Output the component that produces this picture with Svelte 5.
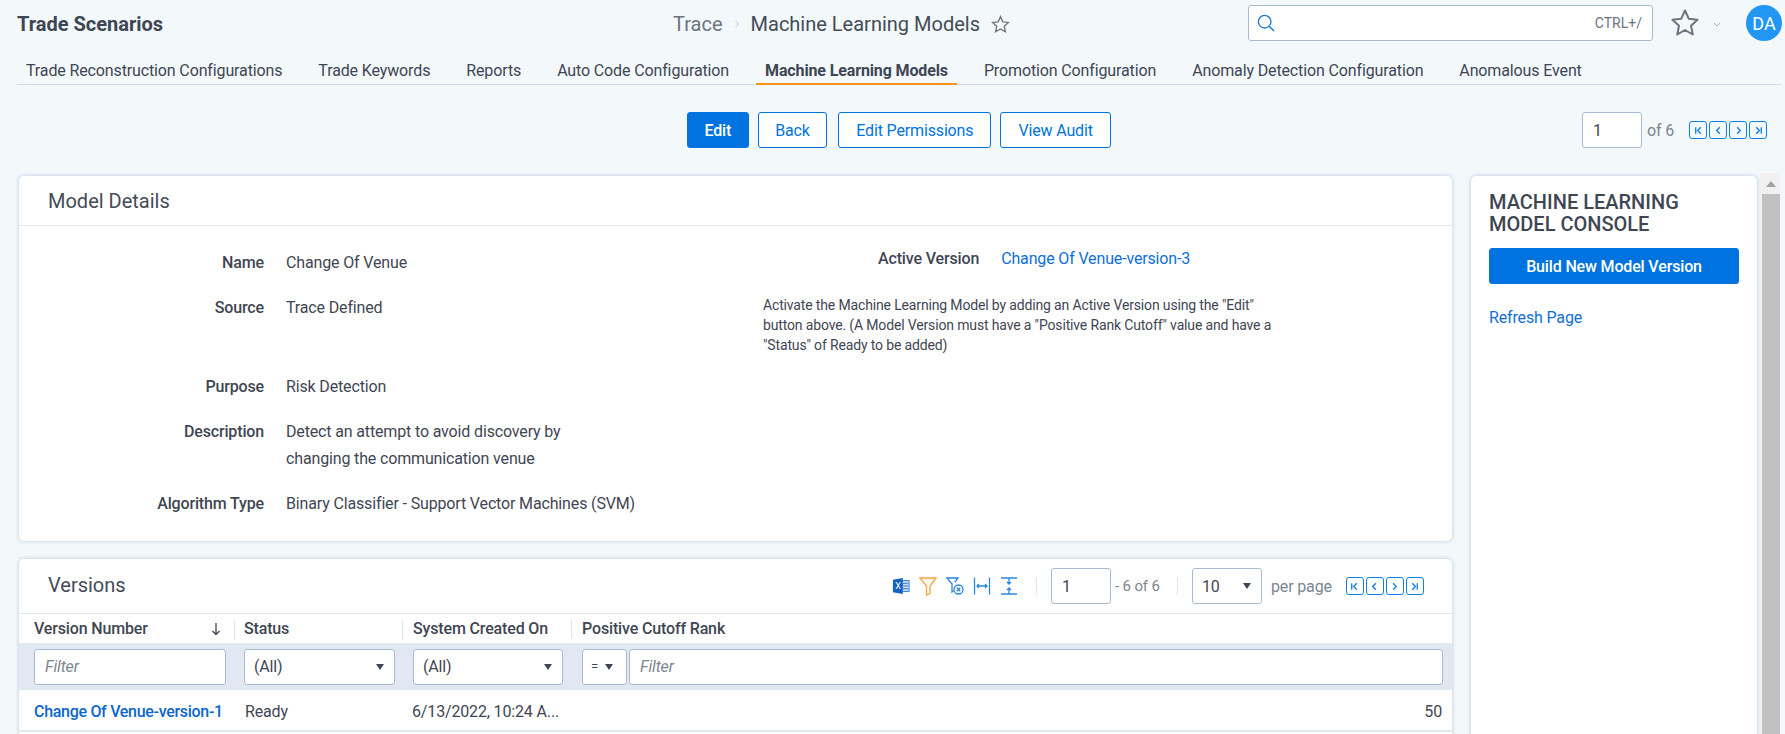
<script>
  const tabs = [
    'Trade Reconstruction Configurations',
    'Trade Keywords',
    'Reports',
    'Auto Code Configuration',
    'Machine Learning Models',
    'Promotion Configuration',
    'Anomaly Detection Configuration',
    'Anomalous Event'
  ];
  const activeTab = 'Machine Learning Models';
  const pagers = [
    'M4 3.5v7M9.5 3.5 6 7l3.5 3.5',
    'M8.5 3.5 5 7l3.5 3.5',
    'M5.5 3.5 9 7l-3.5 3.5',
    'M10 3.5v7M4.5 3.5 8 7l-3.5 3.5'
  ];
</script>

{#snippet pager()}
  <div class="pager">
    {#each pagers as d}
      <button class="page-btn" aria-label="page">
        <svg width="14" height="14" viewBox="0 0 14 14"><path {d} /></svg>
      </button>
    {/each}
  </div>
{/snippet}

<div class="page">
  <header class="topbar">
    <div class="app-name">Trade Scenarios</div>
    <div class="crumbs">
      <span class="crumb">Trace</span>
      <svg class="crumb-sep" width="8" height="10" viewBox="0 0 8 10"><path d="M2.5 2 5.5 5l-3 3" /></svg>
      <span class="crumb-now">Machine Learning Models</span>
      <svg class="crumb-star" width="21" height="21" viewBox="0 0 24 24"><path d="m12 3 2.7 5.9 6.3.7-4.7 4.3 1.3 6.4L12 17.100l-5.600 3.200 1.300-6.400L3 9.600l6.300-.7z" /></svg>
    </div>
    <div class="search">
      <svg width="18" height="18" viewBox="0 0 20 20"><circle cx="8.500" cy="8.500" r="7" /><path d="m13.500 13.500 5.500 5.500" /></svg>
      <span>CTRL+/</span>
    </div>
    <svg class="fav" width="30" height="30" viewBox="0 0 30 30"><path d="m15 2.500 3.700 8.200 8.800 1-6.500 6 1.800 8.800-7.800-4.500-7.800 4.500 1.800-8.800-6.500-6 8.800-1z" /></svg>
    <svg class="caret" width="10" height="6" viewBox="0 0 10 6"><path d="m2 1 3 3 3-3" /></svg>
    <div class="avatar">DA</div>
  </header>

  <nav class="tabs">
    {#each tabs as t}
      <span class="tab" class:active={t === activeTab}>{t}</span>
    {/each}
  </nav>

  <div class="actions">
    <div class="action-btns">
      <button class="btn primary">Edit</button>
      <button class="btn">Back</button>
      <button class="btn perms">Edit Permissions</button>
      <button class="btn audit">View Audit</button>
    </div>
    <div class="record-nav">
      <div class="num-box">1</div>
      <span class="muted">of 6</span>
      {@render pager()}
    </div>
  </div>

  <div class="content">
    <main class="main">
      <section class="card details">
        <h2 class="card-title">Model Details</h2>
        <div class="fields">
          <div class="label">Name</div>
          <div class="value">Change Of Venue</div>
          <div class="active-row">
            <span class="label">Active Version</span>
            <a class="link" href="#v3">Change Of Venue-version-3</a>
          </div>

          <div class="label">Source</div>
          <div class="value">Trace Defined</div>
          <p class="note">Activate the Machine Learning Model by adding an Active Version using the "Edit" button above. (A Model Version must have a "Positive Rank Cutoff" value and have a "Status" of Ready to be added)</p>

          <div class="label">Purpose</div>
          <div class="value wide">Risk Detection</div>

          <div class="label">Description</div>
          <div class="value wide">Detect an attempt to avoid discovery by<br />changing the communication venue</div>

          <div class="label">Algorithm Type</div>
          <div class="value wide">Binary Classifier - Support Vector Machines (SVM)</div>
        </div>
      </section>

      <section class="card versions">
        <div class="versions-head">
          <h2 class="card-title plain">Versions</h2>
          <div class="tools">
            <svg class="tool" width="18" height="18" viewBox="0 0 20 20">
              <rect x="8" y="4" width="11" height="12" fill="#cfe0f5" stroke="#2a75cf" stroke-width="1" />
              <path d="M12 7h6M12 10h6M12 13h6" stroke="#2a75cf" stroke-width="1.200" />
              <path d="M1 3 12 1v18L1 17z" fill="#1565c0" />
              <text x="3.500" y="13.500" class="xl">X</text>
            </svg>
            <svg class="tool ln orange" width="18" height="20" viewBox="0 0 18 20"><path d="M1 2h16l-6 8v7.500L7.500 19v-9z" /></svg>
            <svg class="tool ln" width="18" height="20" viewBox="0 0 18 20"><path d="M9 6l3-4H1l5 6v8l1.500-1" /><circle cx="12.500" cy="13.500" r="4.500" /><path d="m10.800 11.800 3.400 3.400M14.200 11.800l-3.400 3.400" /></svg>
            <svg class="tool ln" width="18" height="20" viewBox="0 0 18 20"><path d="M1.500 1.500v17M16.500 1.500v17M4 10h10M6 8l-2 2 2 2M12 8l2 2-2 2" /></svg>
            <svg class="tool ln" width="18" height="20" viewBox="0 0 18 20"><path d="M1 2h16M1 18h16M9 2v6M9 12v6M7 6l2 2 2-2M7 14l2-2 2 2" /></svg>
          </div>
          <span class="vsep"></span>
          <div class="num-box small">1</div>
          <span class="muted range">- 6 of 6</span>
          <span class="vsep second"></span>
          <div class="size-select"><span>10</span><i class="tri"></i></div>
          <span class="muted perpage">per page</span>
          {@render pager()}
        </div>

        <div class="grid header">
          <div class="th sorted">Version Number
            <svg width="12" height="14" viewBox="0 0 12 14"><path d="M6 1v11.500M2.500 9 6 12.500 9.500 9" /></svg>
          </div>
          <div class="th">Status</div>
          <div class="th wider">System Created On</div>
          <div class="th wider">Positive Cutoff Rank</div>
        </div>

        <div class="grid filters">
          <div class="cell"><div class="input ph">Filter</div></div>
          <div class="cell"><div class="input sel">(All)<i class="tri"></i></div></div>
          <div class="cell"><div class="input sel">(All)<i class="tri"></i></div></div>
          <div class="cell op-cell">
            <div class="input op">=<i class="tri"></i></div>
            <div class="input ph grow">Filter</div>
          </div>
        </div>

        <div class="grid row">
          <a class="link strong" href="#v1">Change Of Venue-version-1</a>
          <div>Ready</div>
          <div class="created">6/13/2022, 10:24 A...</div>
          <div class="num">50</div>
        </div>
      </section>
    </main>

    <aside class="card console">
      <h3>MACHINE LEARNING MODEL CONSOLE</h3>
      <button class="btn primary block">Build New Model Version</button>
      <a class="link refresh" href="#refresh">Refresh Page</a>
    </aside>

    <div class="scrollbar">
      <div class="scroll-up"><i></i></div>
      <div class="scroll-thumb"></div>
    </div>
  </div>
</div>

<style>
  :global(body) {
    background: #f3f8fb;
    overflow: hidden;
  }

  .page {
    height: 734px;
    overflow: hidden;
    font-family: Roboto, "Liberation Sans", sans-serif;
    font-size: 16px;
    letter-spacing: -0.15px;
    color: #3f4653;
    background: #f3f8fb;
  }

  /* top bar */
  .topbar {
    height: 50px;
    display: flex;
    align-items: center;
    padding-left: 17px;
    letter-spacing: 0;
  }
  .app-name {
    font-size: 20px;
    font-weight: 700;
    width: 656px;
    flex: none;
    padding-bottom: 2px;
  }
  .crumbs {
    display: flex;
    align-items: center;
    width: 575px;
    flex: none;
    font-size: 20px;
    padding-bottom: 2px;
  }
  .crumb { color: #6c7480; }
  .crumb-sep { margin: 0 10px; }
  .crumb-sep path { fill: none; stroke: #b5bcc6; stroke-width: 1; }
  .crumb-now { color: #444b57; }
  .crumb-star { margin-left: 10px; }
  .crumb-star path { fill: none; stroke: #6c7480; stroke-width: 1.500; }
  .search {
    width: 405px;
    height: 36px;
    flex: none;
    box-sizing: border-box;
    border: 1px solid #a9bbd3;
    border-radius: 3px;
    background: #fff;
    display: flex;
    align-items: center;
    justify-content: space-between;
    padding: 0 10px 0 8px;
    font-size: 14px;
    color: #6c7480;
    margin-bottom: 4px;
  }
  .search svg { fill: none; stroke: #1f7ad6; stroke-width: 1.500; }
  .fav { margin-left: 17px; margin-bottom: 4px; flex: none; fill: none; stroke: #6c7480; stroke-width: 2; stroke-linejoin: round; }
  .caret { margin-left: 12px; flex: none; fill: none; stroke: #a5adb8; stroke-width: 1; }
  .avatar {
    width: 36px;
    height: 36px;
    flex: none;
    border-radius: 50%;
    background: #2196f3;
    color: #fff;
    font-size: 18px;
    display: flex;
    align-items: center;
    justify-content: center;
    margin-left: 24px;
    margin-bottom: 4px;
  }

  /* tabs */
  .tabs {
    height: 35px;
    margin: 0 4px 0 17px;
    border-bottom: 1px solid #cfdbe8;
    display: flex;
    gap: 18px;
    box-sizing: border-box;
    letter-spacing: -0.13px;
  }
  .tab {
    padding: 11px 9px 0;
    height: 35px;
    box-sizing: border-box;
    white-space: nowrap;
  }
  .tab.active {
    font-weight: 700;
    border-bottom: 2px solid #f7931e;
  }

  /* action row */
  .actions {
    height: 91px;
    position: relative;
    display: flex;
    justify-content: flex-end;
    padding: 27px 18px 0 0;
    box-sizing: border-box;
  }
  .action-btns {
    position: absolute;
    left: 687px;
    top: 27px;
    display: flex;
    gap: 9px;
  }
  .btn {
    height: 36px;
    padding: 0 16.500px;
    border: 1px solid #0073e0;
    border-radius: 3px;
    background: #fff;
    color: #0073e0;
    font: inherit;
    letter-spacing: inherit;
  }
  .btn.perms { margin-left: 2px; padding: 0 17px; }
  .btn.audit { padding: 0 17px; }
  .btn.primary {
    background: #0073e0;
    color: #fff;
    font-weight: 500;
  }
  .record-nav {
    display: flex;
    align-items: center;
    height: 36px;
  }
  .num-box {
    width: 60px;
    height: 36px;
    flex: none;
    box-sizing: border-box;
    border: 1px solid #a9bbd3;
    border-radius: 3px;
    background: #fff;
    padding: 0 10px;
    display: flex;
    align-items: center;
  }
  .muted { color: #7d8590; }
  .record-nav .muted { margin: 0 15px 0 5px; }
  .pager { display: flex; gap: 2px; flex: none; }
  .page-btn {
    width: 18px;
    height: 18px;
    padding: 0;
    border: 1px solid #0f7fe8;
    border-radius: 3px;
    background: transparent;
    display: flex;
    align-items: center;
    justify-content: center;
  }
  .page-btn svg { width: 13px; height: 13px; fill: none; stroke: #0f7fe8; stroke-width: 1.400; }

  /* content */
  .content {
    display: flex;
    align-items: flex-start;
    padding-left: 19px;
  }
  .main {
    width: 1433px;
    flex: none;
    display: flex;
    flex-direction: column;
    gap: 18px;
  }
  .card {
    background: #fff;
    border-radius: 5px;
    box-shadow: 0 0 4px rgba(80, 110, 150, 0.35);
  }
  .card-title {
    margin: 0;
    font-size: 20px;
    font-weight: 400;
    letter-spacing: 0;
    color: #444b57;
    padding: 0 29px;
    height: 50px;
    line-height: 51px;
    border-bottom: 1px solid #e1e8f1;
    box-sizing: border-box;
  }
  .card-title.plain { border: 0; flex: none; width: 873px; line-height: 48px; }

  /* details */
  .details { height: 365px; }
  .fields {
    display: grid;
    grid-template-columns: 245px 460px 1fr;
    column-gap: 22px;
    padding-top: 23px;
    line-height: 27px;
  }
  .label { text-align: right; font-weight: 500; }
  .value { padding-bottom: 18px; }
  .value.wide { grid-column: 2 / 4; }
  .active-row {
    display: flex;
    align-items: baseline;
    gap: 22px;
    margin-top: -4px;
    padding-left: 110px;
  }
  .link { color: #0f6fd8; text-decoration: none; }
  .link.strong { font-weight: 500; color: #0a66d0; letter-spacing: -0.3px; }
  .note {
    margin: 1px 0 0 -5px;
    width: 525px;
    font-size: 14px;
    line-height: 20px;
    padding-bottom: 18px;
  }

  /* versions */
  .versions { height: 400px; }
  .versions-head {
    height: 55px;
    display: flex;
    align-items: center;
    border-bottom: 1px solid #e1e8f1;
    box-sizing: border-box;
  }
  .tools { display: flex; align-items: center; gap: 9px; width: 144px; flex: none; }
  .tool { flex: none; }
  .ln { fill: none; stroke: #2a86e0; stroke-width: 1.300; }
  .ln.orange { stroke: #f5a33c; }
  .xl { fill: #fff; font-size: 10px; font-family: Roboto, sans-serif; }
  .vsep { width: 1px; height: 18px; background: #dfe6ef; margin-right: 14px; flex: none; }
  .vsep.second { margin-left: 14px; }
  .range { margin-left: 4px; width: 48px; flex: none; font-size: 15px; white-space: nowrap; }
  .size-select {
    width: 70px;
    height: 36px;
    flex: none;
    box-sizing: border-box;
    border: 1px solid #a9bbd3;
    border-radius: 3px;
    display: flex;
    align-items: center;
    justify-content: space-between;
    padding: 0 10px 0 9px;
  }
  .tri {
    width: 0;
    height: 0;
    border-left: 4px solid transparent;
    border-right: 4px solid transparent;
    border-top: 6px solid #3f4653;
    flex: none;
  }
  .perpage { margin: 0 14px 0 9px; white-space: nowrap; }

  .grid {
    display: grid;
    grid-template-columns: 215px 168px 169px 1fr;
  }
  .header { height: 29px; align-items: center; }
  .th {
    font-weight: 500;
    padding-left: 9px;
    height: 20px;
    line-height: 20px;
    border-left: 1px solid #dfe6ef;
    white-space: nowrap;
  }
  .th.wider { padding-left: 10px; }
  .th.sorted {
    border-left: 0;
    padding: 0 12px 0 15px;
    display: flex;
    justify-content: space-between;
    align-items: center;
  }
  .th svg { fill: none; stroke: #3f4653; stroke-width: 1.300; }
  .filters {
    height: 47px;
    background: #e1e8f1;
    align-items: center;
  }
  .cell { padding: 0 8px 0 11px; }
  .cell:first-child { padding: 0 8px 0 15px; }
  .cell:nth-child(2) { padding: 0 7px 0 10px; }
  .cell.op-cell { padding: 0 9px 0 11px; display: flex; gap: 2px; }
  .input {
    height: 36px;
    box-sizing: border-box;
    background: #fff;
    border: 1px solid #a9bbd3;
    border-radius: 3px;
    display: flex;
    align-items: center;
    padding: 0 10px;
  }
  .input.ph { font-style: italic; color: #7d8590; }
  .input.sel { justify-content: space-between; padding: 0 10px 0 9px; }
  .input.op { width: 45px; flex: none; gap: 7px; font-size: 13px; padding: 0 7px 0 8px; }
  .grow { flex: 1; }
  .row {
    height: 42px;
    padding-top: 2px;
    align-items: center;
    border-bottom: 2px solid #e1e8f1;
    box-sizing: border-box;
  }
  .row > * { padding-left: 11px; white-space: nowrap; }
  .row > a { padding-left: 15px; }
  .row > .created { padding-left: 10px; }
  .row .num { text-align: right; padding-right: 10px; }

  /* console */
  .console {
    width: 286px;
    height: 640px;
    flex: none;
    margin-left: 19px;
    padding: 15px 18px;
    box-sizing: border-box;
  }
  .console h3 {
    margin: 0 0 13px;
    font-size: 20px;
    font-weight: 500;
    letter-spacing: 0;
    line-height: 22px;
    color: #3f4653;
  }
  .btn.block { width: 100%; padding: 0; }
  .refresh { display: block; margin-top: 24px; }

  .scrollbar {
    width: 20px;
    flex: none;
    margin: -3px 0 0 3px;
    background: #f1f1f1;
    height: 600px;
    box-sizing: border-box;
    padding-left: 2px;
  }
  .scroll-up { height: 21px; display: flex; align-items: center; justify-content: center; }
  .scroll-up i {
    width: 0;
    height: 0;
    border-left: 5px solid transparent;
    border-right: 5px solid transparent;
    border-bottom: 6px solid #a3a3a3;
  }
  .scroll-thumb { height: 579px; background: #c1c1c1; }
</style>
